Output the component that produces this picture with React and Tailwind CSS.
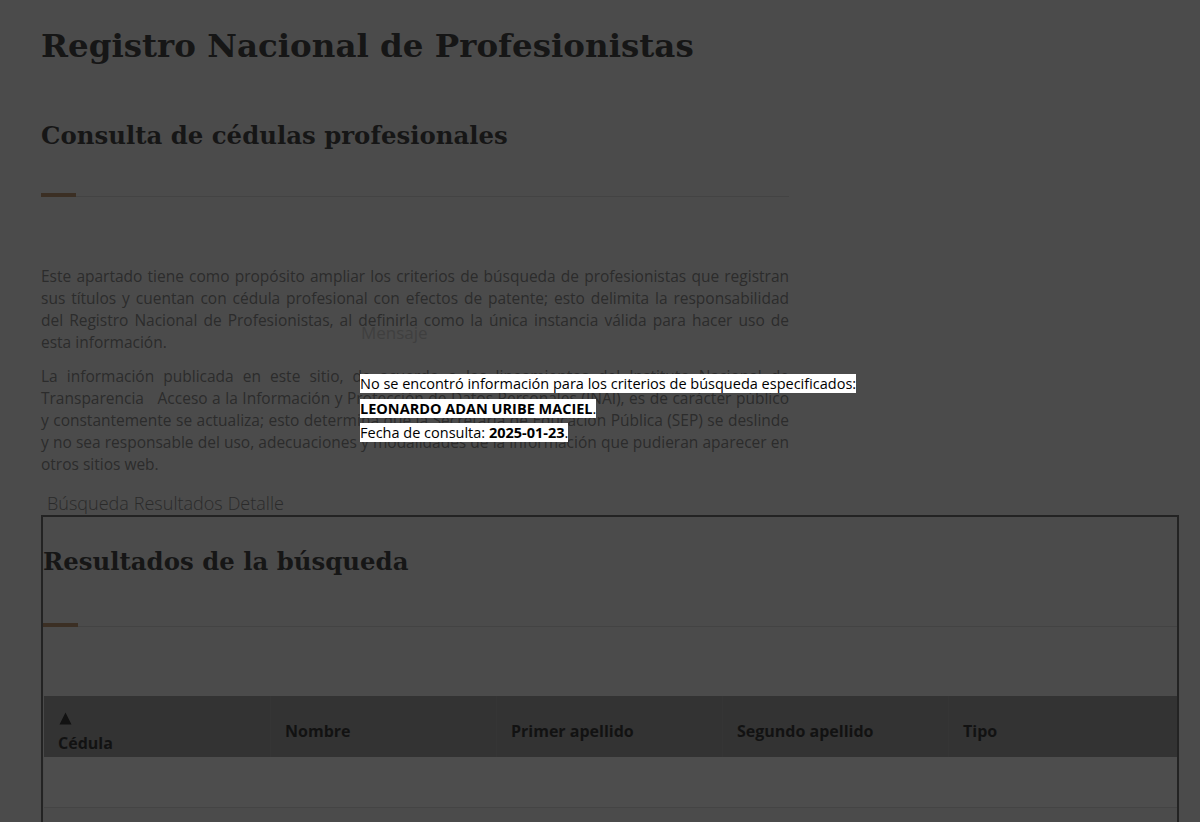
import { useState } from "react";

const serif = { fontFamily: "'DejaVu Serif', 'Liberation Serif', serif" };

function Divider() {
  return (
    <div className="relative h-[5px] border-b border-[#434343]">
      <div className="absolute left-0 top-[1px] h-[4px] w-[35px] bg-[#3b2f24]" />
    </div>
  );
}

const columns = ["Cédula", "Nombre", "Primer apellido", "Segundo apellido", "Tipo"];

function ResultsTable() {
  return (
    <div className="ml-[1px]">
      <div className="grid grid-cols-[226px_226px_226px_226px_1fr] bg-[#333333] h-[61px]">
        {columns.map((c, idx) =>
          idx === 0 ? (
            <div key={c} className="flex flex-col px-[14px] pt-[16px] text-[16px] font-bold text-[#121212]">
              <svg width="13" height="13" viewBox="0 0 13 13" className="ml-[1px]">
                <path d="M6.5 0.5 L12.5 12.5 L0.5 12.5 Z" fill="#121212" />
              </svg>
              <span className="mt-[5px] leading-[26px]">{c}</span>
            </div>
          ) : (
            <div
              key={c}
              className="flex flex-col justify-center px-[14px] pt-[9px] text-[16px] font-bold text-[#121212] border-l border-[#353535]"
            >
              <span>{c}</span>
            </div>
          )
        )}
      </div>
      <div className="h-[51px] border-b border-[#444444] bg-[#4d4d4d]" />
      <div className="h-[14px]" />
    </div>
  );
}

export default function App() {
  const [tab] = useState("Búsqueda");

  return (
    <div
      className="relative min-h-[822px] bg-[#4b4b4b] overflow-hidden"
      style={{ fontFamily: "'Open Sans', 'Liberation Sans', sans-serif" }}
    >
      <div className="pl-[41px] pr-[21px] pt-[24px]">
        <div className="w-[748px]">
          <h1 className="text-[32.5px] leading-[44px] font-bold text-[#161616]" style={serif}>
            Registro Nacional de Profesionistas
          </h1>
          <h2 className="mt-[51px] text-[24.4px] leading-[34px] font-bold text-[#161616]" style={serif}>
            Consulta de cédulas profesionales
          </h2>
          <div className="mt-[39px]">
            <Divider />
          </div>

          <p className="mt-[68px] text-[15.5px] leading-[22px] text-justify text-[#2c2c2c]">
            Este apartado tiene como propósito ampliar los criterios de búsqueda de profesionistas que
            registran sus títulos y cuentan con cédula profesional con efectos de patente; esto delimita la
            responsabilidad del Registro Nacional de Profesionistas, al definirla como la única instancia
            válida para hacer uso de esta información.
          </p>
          <p className="mt-[12px] text-[15.5px] leading-[22px] text-justify text-[#2c2c2c]">
            La información publicada en este sitio, de acuerdo a los lineamientos del Instituto Nacional de
            Transparencia{"\u00a0\u00a0"} Acceso a la Información y Protección de Datos Personales (INAI), es
            de carácter público y constantemente se actualiza; esto determina que la Secretaría de Educación
            Pública (SEP) se deslinde y no sea responsable del uso, adecuaciones y modalidades de la
            información que pudieran aparecer en otros sitios web.
          </p>
        </div>

        <div className="mt-[16px] flex gap-[5px] pl-[6px] text-[18px] font-light text-[#2a2a2a] leading-[24px]">
          <span>{tab}</span>
          <span>Resultados</span>
          <span>Detalle</span>
        </div>

        <div className="border-2 border-[#232323] border-b-0">
          <h2 className="mt-[28px] text-[24.4px] leading-[34px] font-bold text-[#161616]" style={serif}>
            Resultados de la búsqueda
          </h2>
          <div className="mt-[43px]">
            <Divider />
          </div>
          <div className="mt-[69px]">
            <ResultsTable />
          </div>
        </div>
      </div>

      {/* mensaje modal */}
      <div className="absolute left-[360px] top-[321px] text-[14.5px]">
        <div className="text-[17px] leading-[24px] text-[#3f3f3f] pl-[1px]">Mensaje</div>
        <div className="mt-[27px] leading-[24.5px] text-black">
          <span className="bg-white">No se encontró información para los criterios de búsqueda especificados:</span>
          <br />
          <span className="bg-white">
            <b>LEONARDO ADAN URIBE MACIEL</b>.
          </span>
          <br />
          <span className="bg-white">
            Fecha de consulta: <b>2025-01-23</b>.
          </span>
        </div>
      </div>
    </div>
  );
}
